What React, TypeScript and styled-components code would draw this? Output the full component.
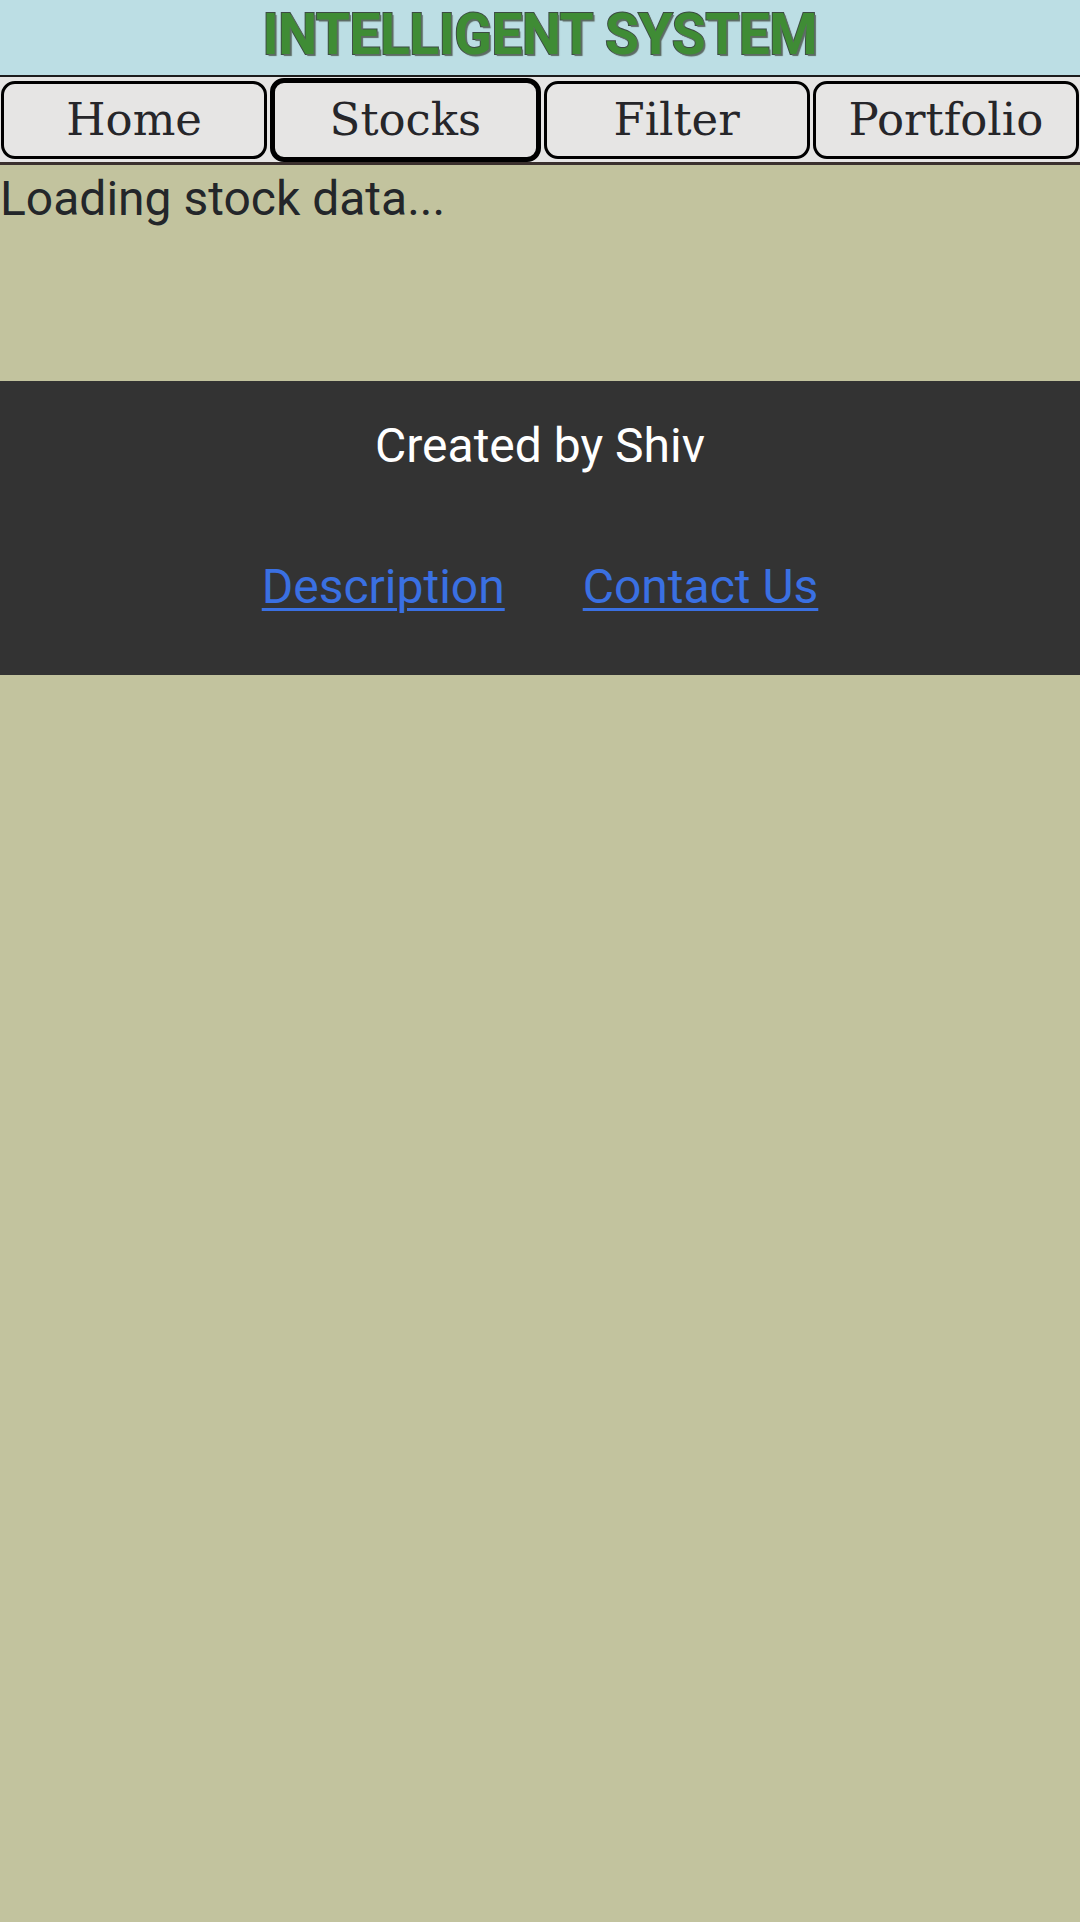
import React from "react";
import styled, { createGlobalStyle } from "styled-components";

const GlobalStyle = createGlobalStyle`
  html, body {
    margin: 0;
    padding: 0;
    background: #c2c39e;
  }
  body {
    font-family: Roboto, "Noto Sans", "Liberation Sans", sans-serif;
    color: #222426;
  }
`;

const Page = styled.div`
  display: flex;
  flex-direction: column;
  min-height: 1922px;
  background: #c2c39e;
`;

const Header = styled.header`
  height: 75px;
  background: #bcdee4;
  display: flex;
  align-items: center;
  justify-content: center;
`;

const Title = styled.h1`
  margin: 0;
  font-family: Roboto, "Liberation Sans", sans-serif;
  font-weight: 700;
  font-size: 58px;
  line-height: 1;
  letter-spacing: -0.5px;
  color: #3f8c35;
  -webkit-text-stroke: 2px #3c4b43;
  paint-order: stroke fill;
  text-shadow: 2px 2px 1px #5c6b63;
  transform: translateY(-4px) scaleX(0.95);
`;

const Nav = styled.nav`
  display: flex;
  align-items: center;
  gap: 3px;
  height: 85px;
  padding: 0 1px;
  background: #e6e5e4;
  border-top: 2px solid #1c1c1c;
  border-bottom: 3px solid #3a302d;
`;

const NavButton = styled.button<{ $active?: boolean }>`
  flex: 1;
  box-sizing: border-box;
  height: ${(p) => (p.$active ? "84px" : "78px")};
  margin: 0;
  padding: 0;
  background: #e6e5e4;
  border: ${(p) => (p.$active ? "5px" : "3px")} solid #000;
  border-radius: 14px;
  font-family: "DejaVu Serif", "Liberation Serif", serif;
  font-size: 45px;
  color: #26262a;
  cursor: pointer;
`;

const Main = styled.main`
  height: 216px;
  padding-top: 6px;
  box-sizing: border-box;
`;

const Loading = styled.div`
  font-size: 48px;
  line-height: 56px;
  color: #23262a;
`;

const Footer = styled.footer`
  background: #333333;
  height: 294px;
  box-sizing: border-box;
  padding-top: 37px;
  display: flex;
  flex-direction: column;
  align-items: center;
`;

const Credit = styled.p`
  margin: 0;
  font-size: 48px;
  line-height: 56px;
  color: #ffffff;
`;

const Links = styled.div`
  display: flex;
  justify-content: center;
  gap: 78px;
  margin-top: 85px;
`;

const FooterLink = styled.a`
  font-size: 48px;
  line-height: 56px;
  color: #3a70e2;
  text-decoration: underline;
  text-decoration-thickness: 3px;
  text-underline-offset: 5px;
`;

const tabs = ["Home", "Stocks", "Filter", "Portfolio"];

export default function App() {
  return (
    <Page>
      <GlobalStyle />
      <Header>
        <Title>INTELLIGENT SYSTEM</Title>
      </Header>
      <Nav>
        {tabs.map((t) => (
          <NavButton key={t} $active={t === "Stocks"}>
            {t}
          </NavButton>
        ))}
      </Nav>
      <Main>
        <Loading>Loading stock data...</Loading>
      </Main>
      <Footer>
        <Credit>Created by Shiv</Credit>
        <Links>
          <FooterLink href="#description">Description</FooterLink>
          <FooterLink href="#contact">Contact Us</FooterLink>
        </Links>
      </Footer>
    </Page>
  );
}
